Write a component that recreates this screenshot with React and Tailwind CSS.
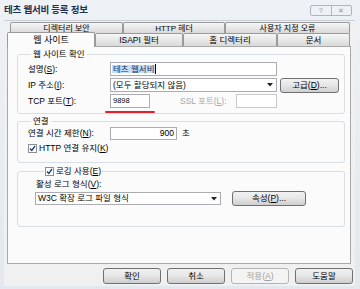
import React from "react";

const font = { fontFamily: '"Liberation Sans", "Noto Sans CJK KR", sans-serif' };

const Btn = ({ children, className = "", disabled }) => (
  <button
    className={`flex items-center justify-center rounded-[3px] border border-[#707070] bg-gradient-to-b from-[#f2f2f2] via-[#e6e6e6] to-[#cfcfcf] text-[8.5px] leading-none ${
      disabled ? "text-[#a0a0a0] border-[#b5b5b5] from-[#f4f4f4] to-[#f4f4f4] via-[#f4f4f4]" : "text-black"
    } ${className}`}
  >
    {children}
  </button>
);

const Check = () => (
  <span className="flex h-[9px] w-[9px] shrink-0 items-center justify-center border border-[#8f8f8f] bg-white">
    <svg width="7" height="7" viewBox="0 0 7 7">
      <path d="M1 3.5 L2.8 5.5 L6 1" stroke="#1c3f7a" strokeWidth="1.3" fill="none" />
    </svg>
  </span>
);

const Tab = ({ w, children, small }) => (
  <div
    className={`${w} flex h-full items-center justify-center rounded-t-[2px] border border-b-0 border-[#9a9a9a] bg-gradient-to-b from-[#f6f6f6] to-[#d9d9d9] ${
      small ? "pt-px text-[8px]" : "text-[8.5px]"
    } leading-none`}
  >
    {children}
  </div>
);

export default function App() {
  return (
    <div
      style={font}
      className="flex h-[289px] w-[360px] flex-col overflow-hidden bg-gradient-to-b from-[#eef2f6] to-[#e2e8ee] text-black"
    >
      {/* title bar */}
      <div className="flex h-[20px] items-center justify-between pl-[4px] pr-[8px]">
        <span className="text-[9.5px] font-bold tracking-tight text-[#1e3050]">테츠 웹서비 등록 정보</span>
        <div className="flex h-[11px] w-[42px] overflow-hidden rounded-[2px] border border-[#aab6c2] bg-[#eef2f6] text-[7px] leading-none text-[#8a96a2]">
          <span className="flex flex-1 items-center justify-center border-r border-[#aab6c2]">?</span>
          <span className="flex flex-1 items-center justify-center">✕</span>
        </div>
      </div>

      {/* client */}
      <div className="ml-[4px] mr-[5px] mb-[3px] flex flex-1 flex-col border-t border-[#c8d0d8] bg-[#f0f0f0]">
        {/* tabs row 1 */}
        <div className="ml-[6px] mt-[1px] flex h-[11px]">
          <Tab w="w-[113px]" small>디렉터리 보안</Tab>
          <Tab w="w-[102px]" small>HTTP 헤더</Tab>
          <Tab w="w-[125px]" small>사용자 지정 오류</Tab>
        </div>
        {/* tabs row 2 */}
        <div className="ml-[3px] flex h-[13px] items-end">
          <div className="relative z-10 -mb-px flex h-[15px] w-[88px] items-center justify-center rounded-t-[2px] border border-b-0 border-[#9a9a9a] bg-[#fbfbfb] text-[9px] leading-none">
            웹 사이트
          </div>
          <Tab w="w-[88px]">ISAPI 필터</Tab>
          <Tab w="w-[94px]">홈 디렉터리</Tab>
          <Tab w="w-[73px]">문서</Tab>
        </div>

        {/* panel */}
        <div className="relative ml-[3px] flex h-[218px] w-[344px] flex-col border border-[#a8a8a8] bg-[#fbfbfb] pl-[9px] pr-[5px] pt-[2px] text-[8.5px] leading-none">
          {/* group 1 */}
          <fieldset className="rounded-[3px] border border-[#d5dfe5] pb-[5px] pl-[10px] pt-[3px]">
            <legend className="ml-[3px] px-[2px] leading-[10px]">웹 사이트 확인</legend>
            <div className="flex flex-col gap-[2px]">
              <div className="flex h-[14px] items-center">
                <span className="w-[82px]">
                  설명(<u>S</u>):
                </span>
                <div className="flex h-[14px] w-[167px] items-center border border-[#abadb3] bg-white px-[1px]">
                  <span className="bg-[#c7dff5] px-px text-[#1a2d5a]">테츠 웹서비</span>
                  <span className="h-[10px] w-px bg-black" />
                </div>
              </div>
              <div className="flex h-[14px] items-center">
                <span className="w-[82px]">
                  IP 주소(<u>I</u>):
                </span>
                <div className="flex h-[14px] w-[167px] items-center justify-between border border-[#abadb3] bg-white pl-[2px] pr-[3px]">
                  <span>(모두 할당되지 않음)</span>
                  <svg width="6" height="4" viewBox="0 0 6 4">
                    <path d="M0 0 H6 L3 3.5 Z" fill="#222" />
                  </svg>
                </div>
                <Btn className="ml-[3px] h-[15px] w-[59px]">
                  고급(<u>D</u>)...
                </Btn>
              </div>
              <div className="flex h-[14px] items-center">
                <span className="w-[82px]">
                  TCP 포트(<u>T</u>):
                </span>
                <div className="flex h-[14px] w-[40px] items-center border border-[#abadb3] bg-white px-[2px] text-[7.5px]">
                  9898
                </div>
                <span className="ml-[30px] w-[56px] whitespace-nowrap text-[#a8a8a8]">
                  SSL 포트(<u>L</u>):
                </span>
                <div className="h-[14px] w-[41px] border border-[#c9c9c9] bg-white" />
              </div>
            </div>
          </fieldset>
          <div className="pointer-events-none absolute left-[97px] top-[64px] h-[2px] w-[50px] rounded-full bg-[#e0212b]" />

          {/* group 2 */}
          <fieldset className="mt-[2px] rounded-[3px] border border-[#d5dfe5] pb-[8px] pl-[10px] pt-px">
            <legend className="ml-[3px] px-[2px] leading-[10px]">연결</legend>
            <div className="flex h-[13px] items-center">
              <span className="w-[82px] whitespace-nowrap">
                연결 시간 제한(<u>N</u>):
              </span>
              <div className="flex h-[13px] w-[67px] items-center justify-end border border-[#abadb3] bg-white px-[2px]">
                900
              </div>
              <span className="ml-[5px]">초</span>
            </div>
            <div className="mt-[3px] flex h-[11px] items-center gap-[2px]">
              <Check />
              <span>
                HTTP 연결 유지(<u>K</u>)
              </span>
            </div>
          </fieldset>

          {/* group 3 */}
          <fieldset className="mt-[3px] rounded-[3px] border border-[#d5dfe5] pb-[20px] pl-[18px] pt-[4px]">
            <legend className="ml-[8px] flex items-center gap-[2px] px-[1px] leading-[10px]">
              <Check />
              <span>
                로깅 사용(<u>E</u>)
              </span>
            </legend>
            <div className="h-[10px]">
              활성 로그 형식(<u>V</u>):
            </div>
            <div className="mt-px flex items-center">
              <div className="-ml-px flex h-[13px] w-[186px] items-center justify-between border border-[#abadb3] bg-white pl-[2px] pr-[3px]">
                <span>W3C 확장 로그 파일 형식</span>
                <svg width="6" height="4" viewBox="0 0 6 4">
                  <path d="M0 0 H6 L3 3.5 Z" fill="#222" />
                </svg>
              </div>
              <Btn className="ml-[11px] h-[15px] w-[74px]">
                속성(<u>P</u>)...
              </Btn>
            </div>
          </fieldset>
        </div>

        {/* buttons */}
        <div className="mt-[4px] flex justify-end gap-[6px] pr-[2px]">
          <Btn className="h-[16px] w-[58px]">확인</Btn>
          <Btn className="h-[16px] w-[58px]">취소</Btn>
          <Btn className="h-[16px] w-[58px]" disabled>
            적용(<u>A</u>)
          </Btn>
          <Btn className="h-[16px] w-[58px]">도움말</Btn>
        </div>
      </div>
    </div>
  );
}
